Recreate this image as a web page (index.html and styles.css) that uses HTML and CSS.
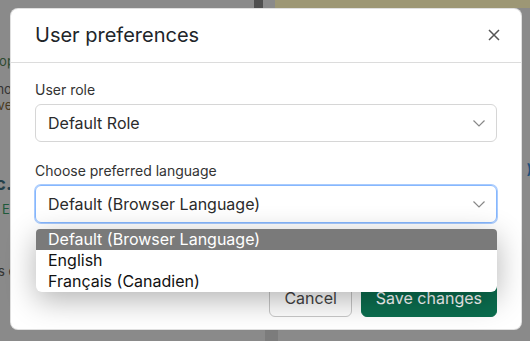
FILE: index.html
```html
<!DOCTYPE html>
<html lang="en">
<head>
    <meta charset="UTF-8">
    <title>User preferences</title>
    <link rel="stylesheet" href="styles.css">
</head>
<body>
    <!-- page behind the dialog (dimmed) -->
    <div class="page">
        <div class="topbar">
            <div class="topbar-left"></div>
            <div class="topbar-rule"></div>
            <div class="topbar-gap"></div>
            <div class="topbar-banner"></div>
        </div>
        <div class="page-body">
            <div class="page-text">
                <p class="t-green">Desktop</p>
                <p class="t-dark gap-s">Common</p>
                <p class="t-brown">Relative</p>
                <p class="t-head">Etc.</p>
                <p class="t-link">EN <span class="t-orange">|</span></p>
                <p class="t-dark gap-l">Notes</p>
                <p class="t-dark">Values e</p>
            </div>
            <div class="page-aside">)</div>
        </div>
        <div class="bottom-rule"></div>
    </div>

    <!-- modal -->
    <div class="backdrop">
        <div class="modal">
            <div class="modal-header">
                <h2 class="modal-title">User preferences</h2>
                <button class="btn-close" aria-label="Close">
                    <svg width="12" height="12" viewBox="0 0 12 12"><path d="M1 1 L11 11 M11 1 L1 11" stroke="#555" stroke-width="1.5" fill="none"/></svg>
                </button>
            </div>
            <div class="modal-body">
                <label class="form-label">User role</label>
                <div class="select">
                    <span>Default Role</span>
                    <svg class="chevron" width="12" height="7" viewBox="0 0 12 7"><path d="M0.5 0.5 L6 6 L11.5 0.5" stroke="#888" stroke-width="1.2" fill="none"/></svg>
                </div>

                <label class="form-label second">Choose preferred language</label>
                <div class="select-wrap">
                    <div class="select focused">
                        <span>Default (Browser Language)</span>
                        <svg class="chevron" width="12" height="7" viewBox="0 0 12 7"><path d="M0.5 0.5 L6 6 L11.5 0.5" stroke="#888" stroke-width="1.2" fill="none"/></svg>
                    </div>
                    <ul class="options">
                        <li class="selected">Default (Browser Language)</li>
                        <li>English</li>
                        <li>Français (Canadien)</li>
                    </ul>
                </div>
            </div>
            <div class="modal-footer">
                <button class="btn btn-cancel">Cancel</button>
                <button class="btn btn-save">Save changes</button>
            </div>
        </div>
    </div>
</body>
</html>
```

FILE: styles.css
```css
* {
    box-sizing: border-box;
}
body {
    margin: 0;
    width: 530px;
    height: 341px;
    overflow: hidden;
    font-family: Inter, "Noto Sans", sans-serif;
    background-color: #8a8a8a;
    position: relative;
}

/* dimmed page */
.page {
    height: 341px;
    display: flex;
    flex-direction: column;
}
.topbar {
    display: flex;
    height: 8px;
}
.topbar-left {
    width: 254px;
}
.topbar-rule {
    width: 9px;
    background-color: #4f4f4f;
}
.topbar-gap {
    width: 12px;
}
.topbar-banner {
    flex: 1;
    background-color: #9d9775;
}
.page-body {
    flex: 1;
    display: flex;
    justify-content: space-between;
}
.page-text {
    margin-left: -36px;
    padding-top: 45px;
    font-size: 13px;
}
.page-text p {
    margin: 0;
    line-height: 16px;
    white-space: nowrap;
}
.t-green { color: #2e4a30; }
.t-dark { color: #333; }
.t-brown { color: #4a3a22; }
.t-head {
    margin-top: 60px !important;
    margin-left: 14px !important;
    font-size: 18px;
    font-weight: bold;
    color: #24404a;
    line-height: 22px !important;
}
.t-link {
    color: #1f5a3a;
    margin-top: 6px !important;
    margin-left: 38px !important;
}
.t-orange { color: #8a5a1c; }
.gap-s { margin-top: 12px !important; }
.gap-l { margin-top: 30px !important; margin-left: 10px; }
.page-aside {
    margin-top: 152px;
    margin-right: -2px;
    color: #1f4f7a;
    font-size: 14px;
    font-weight: bold;
}
.bottom-rule {
    position: absolute;
    left: 265px;
    bottom: 0;
    width: 13px;
    height: 12px;
    background-color: #7c7c7c;
}

/* modal */
.backdrop {
    position: absolute;
    top: 0;
    left: 0;
    right: 0;
    bottom: 0;
    padding: 8px 0 0 10px;
}
.modal {
    width: 512px;
    height: 322px;
    background-color: #fff;
    border: 1px solid rgba(0,0,0,0.12);
    border-radius: 8px;
    display: flex;
    flex-direction: column;
}
.modal-header {
    display: flex;
    justify-content: space-between;
    align-items: center;
    padding: 14px 21px 15px 24px;
    border-bottom: 1px solid #dcdcdc;
}
.modal-title {
    margin: 0;
    font-size: 20px;
    font-weight: 400;
    line-height: 24px;
    color: #212529;
}
.btn-close {
    border: 0;
    background: none;
    padding: 0;
    width: 12px;
    height: 12px;
    display: flex;
}
.modal-body {
    padding: 16px 24px 0;
}
.form-label {
    display: block;
    font-size: 14px;
    line-height: 21px;
    color: #333;
    margin-bottom: 4px;
}
.form-label.second {
    margin-top: 18px;
}
.select {
    height: 38px;
    display: flex;
    justify-content: space-between;
    align-items: center;
    padding: 0 11px 0 12px;
    border: 1px solid #d6d6d6;
    border-radius: 6px;
    font-size: 16px;
    color: #2b2b2b;
}
.select.focused {
    border-color: #86b7fe;
    box-shadow: 0 0 0 1px #a9cbfd;
}
.select-wrap {
    position: relative;
}
.options {
    position: absolute;
    top: 44px;
    left: 1px;
    right: 0;
    margin: 0;
    padding: 0;
    list-style: none;
    background-color: #fff;
    border-radius: 4px 4px 6px 6px;
    box-shadow: 0 8px 30px rgba(0,0,0,0.3);
    overflow: hidden;
    font-size: 16px;
}
.options li {
    height: 21px;
    line-height: 21px;
    padding-left: 12px;
    color: #111;
}
.options li.selected {
    background-color: #7a7a7a;
    color: #fff;
}
.modal-footer {
    margin-top: auto;
    display: flex;
    justify-content: flex-end;
    gap: 9px;
    padding: 0 24px 12px;
}
.btn {
    height: 38px;
    padding: 0 14px;
    font-family: inherit;
    font-size: 16px;
    border-radius: 6px;
}
.btn-cancel {
    background-color: #fff;
    border: 1px solid #c8c8c8;
    color: #444;
}
.btn-save {
    background-color: #0b6e4f;
    border: 1px solid #0b6e4f;
    color: #fff;
}
```
